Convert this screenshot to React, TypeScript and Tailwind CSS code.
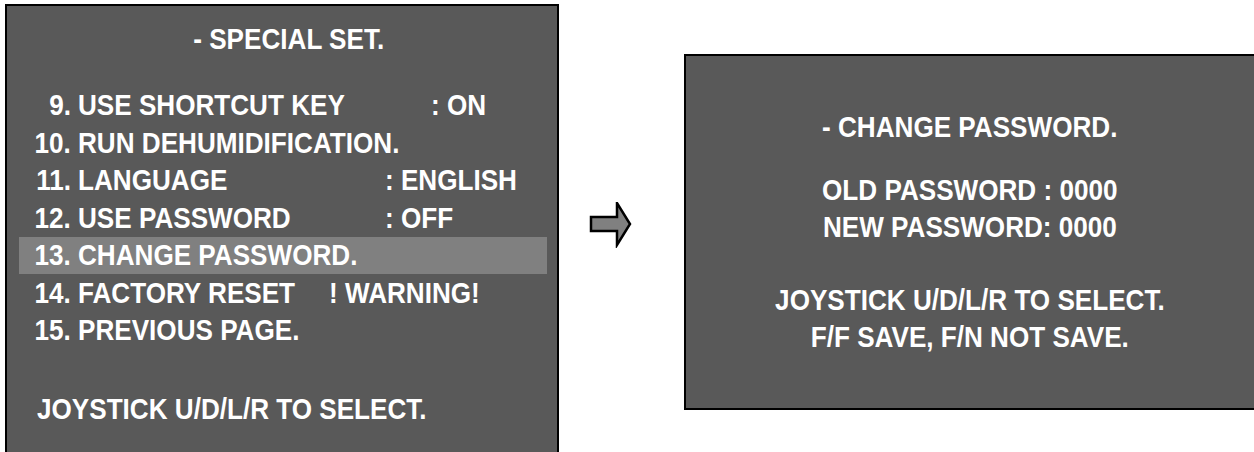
import React from "react";

const font = { fontFamily: '"Liberation Sans", Arial, sans-serif' };

function Row({ num, label, value, valueLeft, highlight }: { num: string; label: string; value?: string; valueLeft?: string; highlight?: boolean }) {
  return (
    <div className={"flex h-[37.5px] items-center whitespace-nowrap " + (highlight ? "bg-[#808080]" : "")}>
      <span className="w-[52px] text-right">
        <span className="inline-block origin-right scale-x-[0.87]">{num}</span>
      </span>
      <span className="ml-[7px] inline-block origin-left scale-x-[0.87]">{label}</span>
      {value ? <span className={"absolute inline-block origin-left scale-x-[0.87] " + (valueLeft ?? "")}>{value}</span> : null}
    </div>
  );
}

function C({ children, className }: { children: React.ReactNode; className?: string }) {
  return (
    <div className={"flex h-[37px] items-center justify-center whitespace-nowrap " + (className ?? "")}>
      <span className="inline-block scale-x-[0.87]">{children}</span>
    </div>
  );
}

export default function App() {
  return (
    <div className="flex h-[452px] w-[1254px] overflow-hidden bg-white text-[30px] font-bold leading-none text-white" style={font}>
      <div className="ml-[5px] mt-[4px] h-[470px] w-[554px] shrink-0 border-2 border-black bg-[#595959]">
        <C className="mt-[14px] h-[37.5px] pl-[14px]">- SPECIAL SET.</C>
        <div className="relative mt-[29.5px] pl-[12px] pr-[10px]">
          <Row num="9." label="USE SHORTCUT KEY" value=": ON" valueLeft="left-[424px]" />
          <Row num="10." label="RUN DEHUMIDIFICATION." />
          <Row num="11." label="LANGUAGE" value=": ENGLISH" valueLeft="left-[378px]" />
          <Row num="12." label="USE PASSWORD" value=": OFF" valueLeft="left-[378px]" />
          <Row num="13." label="CHANGE PASSWORD." highlight />
          <Row num="14." label="FACTORY RESET" value="! WARNING!" valueLeft="left-[322px]" />
          <Row num="15." label="PREVIOUS PAGE." />
        </div>
        <div className="mt-[41.5px] flex h-[37.5px] items-center pl-[30px] whitespace-nowrap">
          <span className="inline-block origin-left scale-x-[0.87]">JOYSTICK U/D/L/R TO SELECT.</span>
        </div>
      </div>
      <div className="flex w-[125px] shrink-0 items-start justify-start pl-[29px] pt-[202px]">
        <svg width="46" height="46" viewBox="0 0 46 46">
          <path d="M3 15 H29 V1 L42 22 L29 43 V29 H3 Z" fill="#808080" stroke="#000" strokeWidth="2.5" strokeLinejoin="miter" />
        </svg>
      </div>
      <div className="mt-[54px] flex h-[356px] w-[572px] shrink-0 flex-col items-center border-2 border-black bg-[#595959]">
        <C className="mt-[52px]">- CHANGE PASSWORD.</C>
        <C className="mt-[26px]">OLD PASSWORD : 0000</C>
        <C>NEW PASSWORD: 0000</C>
        <C className="mt-[36px]">JOYSTICK U/D/L/R TO SELECT.</C>
        <C>F/F SAVE, F/N NOT SAVE.</C>
      </div>
    </div>
  );
}
